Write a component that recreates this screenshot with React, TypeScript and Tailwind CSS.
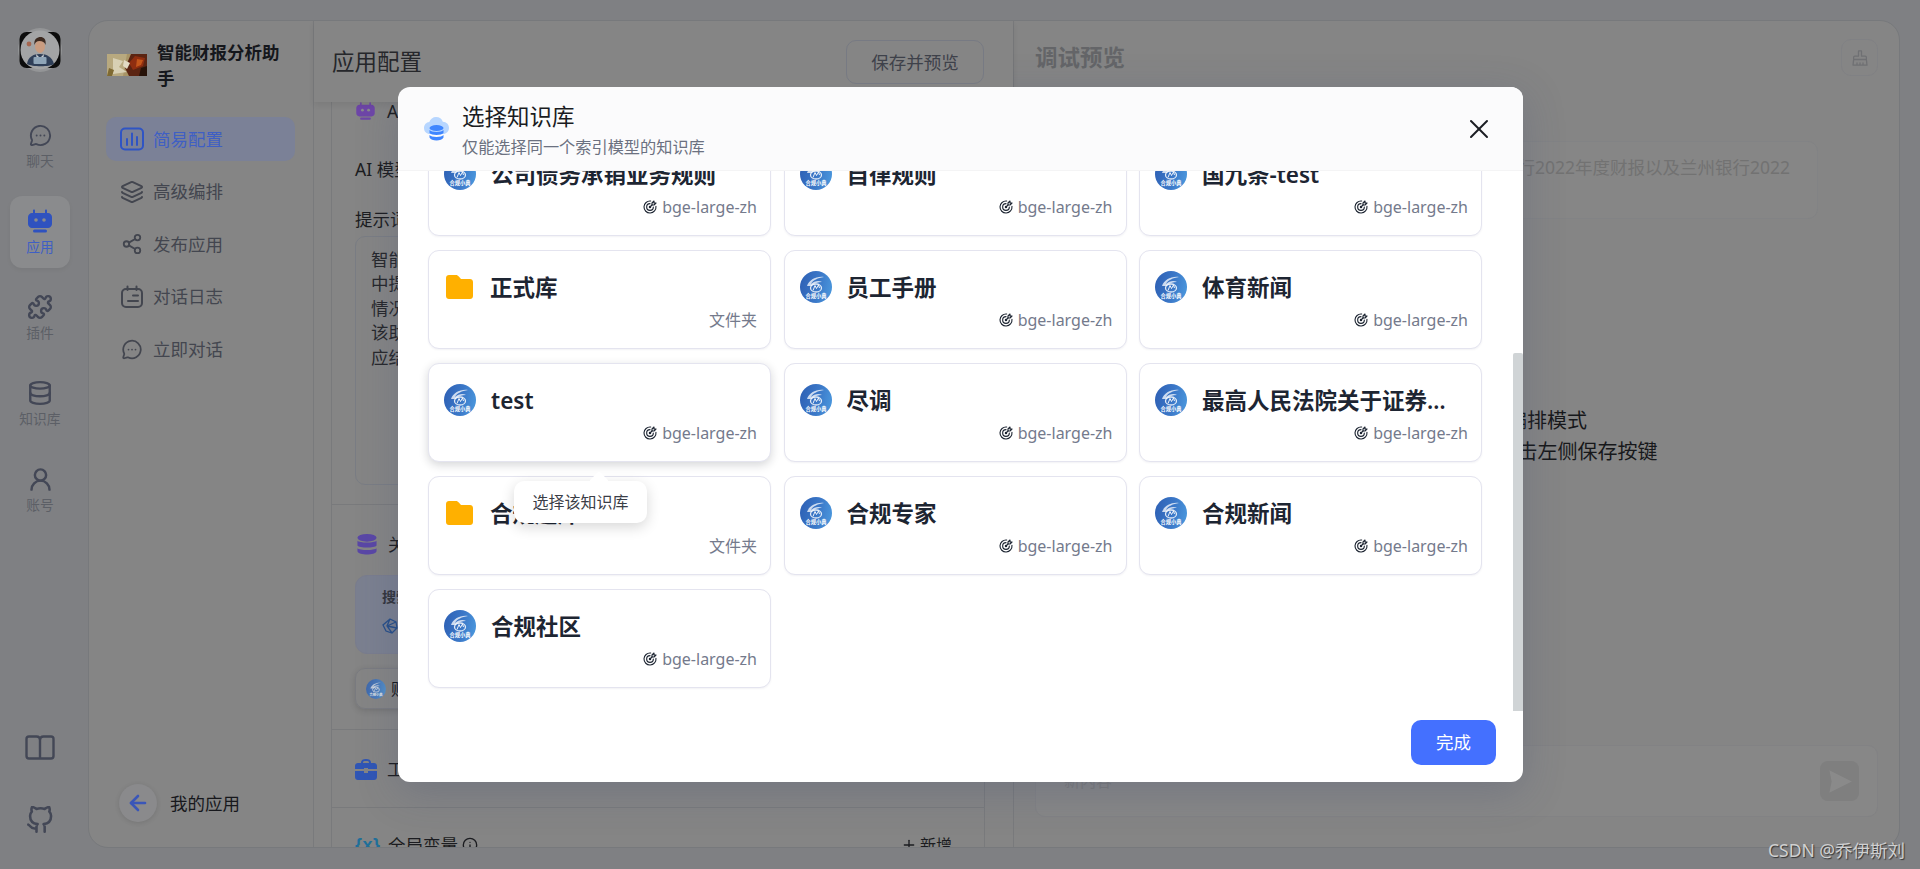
import { ArrowLeft, Info, Layers, MessageCircleMore, Plus, Puzzle, Share2, X, Database, UserRound } from "lucide-react";
import { TbTargetArrow } from "react-icons/tb";
import { FiGithub } from "react-icons/fi";

type Kb = { name: string; folder?: boolean; tip?: boolean };

const kbs: Kb[] = [
  { name: "公司债务承销业务规则" },
  { name: "自律规则" },
  { name: "国九条-test" },
  { name: "正式库", folder: true },
  { name: "员工手册" },
  { name: "体育新闻" },
  { name: "test", tip: true },
  { name: "尽调" },
  { name: "最高人民法院关于证券市场虚假陈述" },
  { name: "合规题库", folder: true },
  { name: "合规专家" },
  { name: "合规新闻" },
  { name: "合规社区" },
];

function KbLogo({ className = "h-8 w-8" }: { className?: string }) {
  return (
    <svg viewBox="0 0 32 32" className={`shrink-0 ${className}`}>
      <defs>
        <linearGradient id="kb-logo" x1="0" y1="0.4" x2="1" y2="0.6">
          <stop offset="0" stopColor="#2f62b6" />
          <stop offset="0.55" stopColor="#3b78c8" />
          <stop offset="1" stopColor="#4a96dc" />
        </linearGradient>
      </defs>
      <circle cx="16" cy="16" r="16" fill="url(#kb-logo)" />
      <path d="M7 15c2-6 9-10 17-9-6 1-11 3-13 7 3-3 8-4 11-2-4 0-8 1-10 4z" fill="#fff" fillOpacity="0.75" />
      <ellipse cx="16" cy="17" rx="5.5" ry="4" fill="none" stroke="#fff" strokeOpacity="0.85" strokeWidth="1.3" />
      <path d="M13 19.5l2-5 1.5 3 2-3.500 1 3" fill="none" stroke="#fff" strokeWidth="0.9" />
      <text x="16" y="27" textAnchor="middle" fontSize="5.2" fontWeight="700" fill="#fff" fontFamily="'Noto Sans CJK SC', sans-serif">合规小典</text>
    </svg>
  );
}

function FolderIcon() {
  return (
    <svg viewBox="0 0 27 24" className="ml-[2px] h-6 w-[27px] shrink-0">
      <path d="M3 0h7c1.200 0 2 .6 2.800 1.500L15 4h9c1.700 0 3 1.300 3 3v14c0 1.700-1.300 3-3 3H3c-1.700 0-3-1.300-3-3V3c0-1.700 1.300-3 3-3z" fill="#ffb000" />
    </svg>
  );
}

function KbCard({ kb }: { kb: Kb }) {
  return (
    <div className={`relative flex flex-col rounded-[11px] border border-[#e4e4ef] bg-white pl-[15px] pr-[13px] pt-[20px] ${kb.tip ? "z-10 shadow-[0_3px_10px_rgba(20,25,40,0.18)]" : "shadow-[0_1px_2px_rgba(40,40,80,0.06)]"}`}>
      <div className="flex h-8 items-center">
        {kb.folder ? <FolderIcon /> : <KbLogo />}
        <div className={`mt-[2px] truncate text-[22.5px] font-semibold leading-8 text-[#1d2532] ${kb.folder ? "ml-[17px]" : "ml-[15px]"}`}>{kb.name}</div>
      </div>
      <div className="mt-[5px] flex items-center justify-end text-[16px] leading-6 text-[#747a8c]">
        {kb.folder ? (
          "文件夹"
        ) : (
          <>
            <TbTargetArrow className="mr-[4px] h-4 w-4 text-[#1d2532]" strokeWidth={1.7} />
            bge-large-zh
          </>
        )}
      </div>
      {kb.tip && (
        <div className="absolute left-[85px] top-[117px] z-20 flex h-[42px] w-[133px] items-center justify-center rounded-[10px] bg-white text-[16px] text-[#3b3e47] shadow-[0_4px_14px_rgba(0,0,0,0.16)]">
          <div className="absolute -top-[7px] left-[78px] h-[14px] w-[14px] rotate-45 rounded-[2px] bg-white" />
          <span className="relative">选择该知识库</span>
        </div>
      )}
    </div>
  );
}

function RobotIcon({ className }: { className: string }) {
  return (
    <svg viewBox="0 0 26 26" className={className} fill="currentColor">
      <path d="M7 1.500c.7 0 1 .4 1 1V5h10V2.500c0-.6.3-1 1-1s1 .4 1 1V5h1c2 0 4 1.800 4 4v7c0 2.200-2 4-4 4H5c-2 0-4-1.800-4-4V9c0-2.200 2-4 4-4h1V2.500c0-.6.3-1 1-1z" />
      <rect x="6" y="21.500" width="14" height="3" rx="1.500" />
      <circle cx="9" cy="12" r="1.800" fill="#8a8b8d" />
      <circle cx="17" cy="12" r="1.800" fill="#8a8b8d" />
    </svg>
  );
}

function BookIcon() {
  return (
    <svg viewBox="0 0 30 26" className="h-[26px] w-[30px]" fill="none" stroke="#434756" strokeWidth="2.400" strokeLinejoin="round">
      <path d="M15 5c0-2-1.500-3.500-3.500-3.500H4C2.500 1.500 1.500 2.500 1.500 4v17c0 1.500 1 2.500 2.500 2.500h22c1.500 0 2.500-1 2.500-2.500V4c0-1.500-1-2.500-2.500-2.500h-7.500C16.500 1.500 15 3 15 5v18" />
    </svg>
  );
}

function ConfigIcon() {
  return (
    <svg viewBox="0 0 24 24" className="h-6 w-6" fill="none" stroke="#2f54c4" strokeWidth="2" strokeLinecap="round">
      <rect x="1" y="1.500" width="22" height="21" rx="4" />
      <path d="M7 12v6M12 6.500V18M17 10v8" />
    </svg>
  );
}

function LogIcon() {
  return (
    <svg viewBox="0 0 24 24" className="h-6 w-6" fill="none" stroke="#43464f" strokeWidth="2" strokeLinecap="round">
      <rect x="2" y="4" width="20" height="18" rx="4" />
      <path d="M7.500 1.500V5M16.500 1.500V5M13 10.500h5M8 16h10" />
    </svg>
  );
}

function AppLogo() {
  return (
    <svg viewBox="0 0 40 22" className="h-[22px] w-10 shrink-0">
      <rect width="40" height="22" fill="#a89466" />
      <path d="M0 0h20l-4 22H0z" fill="#b8a97f" />
      <path d="M6 4l10 3-4 6 8 5-14 2z" fill="#d8d0b4" />
      <path d="M2 14l5 2-2 6H0z" fill="#7f6a32" />
      <path d="M24 0h16v22H22l-4-8z" fill="#5b2412" />
      <path d="M28 2l10 2-2 8-10 4-4-7z" fill="#8f2e10" />
      <path d="M30 5l6 1-2 5-5 2z" fill="#c4561a" />
      <path d="M34 14l6-2v10h-8z" fill="#271208" />
      <path d="M17 6l6 3-3 6-4-3z" fill="#e2dac4" />
    </svg>
  );
}

function Avatar() {
  return (
    <svg viewBox="0 0 44 44" className="h-[44px] w-[44px]">
      <circle cx="22" cy="22" r="22" fill="#949597" />
      <rect x="1.500" y="4" width="41" height="36" rx="7" fill="#0c0c0c" />
      <circle cx="22" cy="22" r="19.500" fill="#a3a4a5" />
      <circle cx="11" cy="16" r="2.400" fill="#a5664f" />
      <path d="M9 36c1-7 6-10 13-10s12 3 14 10c-4 3-22 3-27 0z" fill="#2f3f58" />
      <path d="M18 26l4 4 4-4-1 6h-6z" fill="#c9cdd2" />
      <ellipse cx="22" cy="18.500" rx="5" ry="6.500" fill="#c99c80" />
      <path d="M16.500 17c-1-6 3-8 6-8s6 2 5 8c-1-3-3-4-6-4s-4 1-5 4z" fill="#3d2a20" />
      <rect x="15.500" y="29" width="13" height="7" rx="1" fill="#8fa5b8" />
    </svg>
  );
}

function BroomIcon() {
  return (
    <svg viewBox="0 0 24 24" className="h-[18px] w-[18px]" fill="none" stroke="#6f7073" strokeWidth="1.700" strokeLinejoin="round" strokeLinecap="round">
      <path d="M10 2.500h4v7h5c1 0 1.500.6 1.500 1.500v3h-17v-3c0-.9.5-1.500 1.500-1.500h5z" />
      <path d="M3.500 14l-.8 7.500h18.600l-.8-7.500M8 21.500v-3M12 21.500v-3M16 21.500v-3" />
    </svg>
  );
}

function RailItem({ icon, label, active }: { icon: React.ReactNode; label: string; active?: boolean }) {
  return (
    <div className={`flex h-[72px] w-[60px] flex-col items-center rounded-[12px] pt-[11px] ${active ? "bg-[#8a8b8d] text-[#2f52bf] shadow-[0_2px_4px_rgba(0,0,0,0.05)]" : "text-[#434756]"}`}>
      <div className="flex h-7 items-center justify-center">{icon}</div>
      <div className={`mt-[5px] whitespace-nowrap text-[13.75px] leading-[14px] ${active ? "text-[#3f5fc4]" : "text-[#5c5f66]"}`}>{label}</div>
    </div>
  );
}

function NavItem({ icon, label, active }: { icon: React.ReactNode; label: string; active?: boolean }) {
  return (
    <div className={`flex h-11 w-[189px] items-center gap-[9px] rounded-[10px] pl-[14px] text-[17.5px] ${active ? "bg-[#7b8197] text-[#3f5fc4]" : "text-[#43464f]"}`}>
      {icon}
      <span>{label}</span>
    </div>
  );
}

export default function App() {
  return (
    <div className="relative flex h-[869px] w-[1920px] overflow-hidden bg-[#7f8083] font-['Noto_Sans','Noto_Sans_CJK_SC',sans-serif]">
      {/* left rail */}
      <div className="flex w-[88px] shrink-0 flex-col items-center pb-[35px] pr-[8px] pt-[28px]">
        <Avatar />
        <div className="mt-[38px] flex flex-col items-center gap-[14px]">
          <RailItem icon={<MessageCircleMore className="h-[23px] w-[23px]" strokeWidth={2} />} label="聊天" />
          <RailItem active icon={<RobotIcon className="h-[26px] w-[26px]" />} label="应用" />
          <RailItem icon={<Puzzle className="h-[26px] w-[26px]" strokeWidth={2.2} />} label="插件" />
          <RailItem icon={<Database className="h-[26px] w-[26px]" strokeWidth={2.2} />} label="知识库" />
          <RailItem icon={<UserRound className="h-[27px] w-[27px]" strokeWidth={2.2} />} label="账号" />
        </div>
        <div className="mt-auto flex flex-col items-center gap-[45px] text-[#434756]">
          <BookIcon />
          <FiGithub className="h-7 w-7" strokeWidth={2.200} />
        </div>
      </div>

      <div className="mt-[20px] flex h-[828px] w-[1812px] overflow-hidden rounded-[20px] border border-[#77797c] bg-[#858585]">
        {/* app sidebar */}
        <div className="flex w-[225px] shrink-0 flex-col border-r border-[#797a7c] pb-[25px] pl-[17px]">
          <div className="flex items-center gap-[10px] pl-[1px] pt-[18px]">
            <AppLogo />
            <div className="w-[128px] text-[17.5px] font-bold leading-[26px] text-[#15171c]">智能财报分析助手</div>
          </div>
          <div className="mt-[26px] flex flex-col gap-[8.500px]">
            <NavItem active icon={<ConfigIcon />} label="简易配置" />
            <NavItem icon={<Layers className="h-6 w-6" strokeWidth={2} />} label="高级编排" />
            <NavItem icon={<Share2 className="h-[22px] w-6" strokeWidth={2} />} label="发布应用" />
            <NavItem icon={<LogIcon />} label="对话日志" />
            <NavItem icon={<MessageCircleMore className="h-[21px] w-6" strokeWidth={2} />} label="立即对话" />
          </div>
          <div className="ml-[13px] mt-auto flex items-center gap-[13px]">
            <div className="flex h-[38px] w-[38px] items-center justify-center rounded-full bg-[#8a8a8c] shadow-[0_1px_5px_rgba(0,0,0,0.12)]">
              <ArrowLeft className="h-[24px] w-[24px] text-[#3a56b8]" strokeWidth={2.600} />
            </div>
            <span className="text-[17.5px] text-[#17181c]">我的应用</span>
          </div>
        </div>

        {/* config column */}
        <div className="flex w-[700px] shrink-0 flex-col border-r border-[#797a7c]">
          <div className="relative z-10 flex h-[81px] shrink-0 items-center justify-between bg-[#858585] pl-[18px] pr-[29px] pt-[1px] shadow-[0_3px_6px_rgba(0,0,0,0.08)]">
            <div className="text-[22.5px] text-[#26272b]">应用配置</div>
            <div className="flex h-[44px] w-[138px] items-center justify-center rounded-[10px] border border-[#777a83] text-[17.5px] text-[#3e414a]">保存并预览</div>
          </div>
          <div className="ml-[17px] w-[654px] flex-1 overflow-hidden border-x border-[#797a7c] text-[17.5px] text-[#1b1c20]">
            <div className="h-[403px] border-b border-[#797a7c] pl-[23px]">
              <div className="flex h-[18px] items-center gap-[11px]">
                <RobotIcon className="h-[20px] w-[21px] text-[#6e46a8]" />
                <span>AI 配置</span>
              </div>
              <div className="mt-[37px] leading-6">AI 模型</div>
              <div className="mt-[26px] leading-6">提示词</div>
              <div className="mt-[5px] h-[249px] w-[608px] rounded-[10px] border border-[#7a7d84] pl-[15px] pt-[10px] leading-[24.400px] text-[#26272b]">
                智能财报分析助手<br />中提取财务数据<br />情况进行分析<br />该助手可以<br />应结合知识库
              </div>
            </div>
            <div className="h-[225px] border-b border-[#797a7c] pl-[23px] pt-[28px]">
              <div className="flex h-[22px] items-center gap-[11px]">
                <svg viewBox="0 0 20 22" className="ml-[2px] h-[21px] w-5" fill="#5a47a6">
                  <ellipse cx="10" cy="4" rx="10" ry="4" />
                  <path d="M0 7c2 2.500 18 2.500 20 0v5c-2 3-18 3-20 0zM0 15c2 2.500 18 2.500 20 0v3c-1 4.500-19 4.500-20 0z" />
                </svg>
                <span>关联知识库</span>
              </div>
              <div className="mt-[20px] h-[79px] w-[608px] rounded-[12px] border border-[#7a7d8e] bg-[#7b8090] pl-[26px] pt-[11px]">
                <div className="text-[14px] font-semibold leading-5 text-[#33353c]">搜索参数</div>
                <div className="mt-[11px] flex h-[16px] items-center">
                  <svg viewBox="0 0 16 16" className="h-4 w-4" fill="none" stroke="#274f8a" strokeWidth="1.300">
                    <path d="M8 1l6 3 1 6-5 5-6-2-3-6zM8 1L5 8l5 7M5 8l9-4M5 8l10 2" />
                  </svg>
                </div>
              </div>
              <div className="mt-[14px] flex h-[41px] w-[290px] items-center gap-[5px] rounded-[10px] border border-[#7a7b80] pl-[10px] shadow-[0_2px_6px_rgba(0,0,0,0.14)]">
                <KbLogo className="h-5 w-5 opacity-80" />
                <span className="text-[16px] text-[#121317]">财报数据</span>
              </div>
            </div>
            <div className="flex h-[78px] items-center gap-[10px] border-b border-[#797a7c] pl-[23px] pt-[1px]">
              <svg viewBox="0 0 22 22" className="h-[22px] w-[22px]" fill="#3056b5">
                <path d="M6 4.500C6 2 8 1 11 1s5 1 5 3.500V5h3c1.700 0 3 1.300 3 3v3H13v-1H9v1H0V8c0-1.700 1.300-3 3-3h3zM8 5h6v-.5C14 3.300 13 3 11 3s-3 .3-3 1.500zM0 13h9v2h4v-2h9v6c0 1.700-1.300 3-3 3H3c-1.700 0-3-1.300-3-3z" />
              </svg>
              <span>工具</span>
            </div>
            <div className="flex h-[60px] items-center justify-between pl-[23px] pr-[32px] pt-[14px]">
              <div className="flex items-center">
                <span className="w-[33px] font-['Liberation_Sans',sans-serif] text-[18px] font-bold tracking-[0.5px] text-[#1f6f99]">{"{x}"}</span>
                <span>全局变量</span>
                <Info className="ml-[4px] h-4 w-4" />
              </div>
              <div className="flex items-center gap-[3px] text-[16px]">
                <Plus className="h-4 w-4" />
                新增
              </div>
            </div>
          </div>
        </div>

        {/* debug column */}
        <div className="flex flex-1 flex-col pl-[21px] pr-[21px]">
          <div className="mt-[18px] flex h-[37px] shrink-0 items-center justify-between">
            <div className="text-[22.5px] font-bold text-[#646568]">调试预览</div>
            <div className="flex h-[37px] w-[37px] items-center justify-center rounded-[10px] border border-[#808184]">
              <BroomIcon />
            </div>
          </div>
          <div className="ml-auto mr-[60px] mt-[65px] h-[78px] w-[700px] rounded-[10px] border border-[#828385] bg-[#868686] pr-[27px] pt-[13px] text-[17.5px] leading-6 text-[#727272]">
            <div className="whitespace-nowrap text-right">请分析一下兰州银行2022年度财报以及兰州银行2022</div>
            <div className="pl-[26px]">年度财报的差异</div>
          </div>
          <div className="ml-[372px] mt-[186px] text-[20px] leading-[31px] text-[#17181b]">
            <div>当前为简易编排模式</div>
            <div>需保存, 请点击左侧保存按键</div>
          </div>
          <div className="mb-[30px] mt-auto flex h-[72px] items-center justify-between rounded-[10px] border border-[#828284] bg-[#878787] pl-[28px] pr-[18px]">
            <span className="text-[16px] text-[#7b7b7b]">新内容</span>
            <div className="flex h-10 w-[39px] items-center justify-center rounded-[8px] bg-[#7f7f7f]">
              <svg viewBox="0 0 24 24" className="h-[27px] w-[27px]" fill="#8a8a8a">
                <path d="M3 2l20 10L3 22l2-10z" />
              </svg>
            </div>
          </div>
        </div>
      </div>

      {/* 选择知识库 modal */}
      <div className="absolute left-[398px] top-[87px] flex h-[695px] w-[1125px] flex-col overflow-hidden rounded-[12px] bg-white shadow-[0_10px_40px_rgba(60,70,110,0.25)]">
        <div className="relative z-20 flex h-[84px] shrink-0 items-center border-b border-[#f4f4f5] bg-[#fbfbfc] pl-[26px] pr-[28px]">
          <svg viewBox="0 0 25 24" className="h-6 w-[25px] shrink-0">
            <path d="M12 0c3.500 0 6 2 6.800 4.800C22.500 5 25 7.500 25 11c0 3.500-2.800 6-6 6H6c-3.500 0-6-2.500-6-6 0-3.300 2.300-5.700 5.300-6C6.300 2 9 0 12 0z" fill="#b7d6ff" />
            <ellipse cx="12.500" cy="11" rx="7" ry="3" fill="#3f86ff" />
            <path d="M5.500 13c1.500 2.500 12.500 2.500 14 0v3c-1.500 2.500-12.500 2.500-14 0zM5.500 18c1.500 2.500 12.500 2.500 14 0v2.500C18 24.500 7 24.500 5.500 20.500z" fill="#3f86ff" />
          </svg>
          <div className="ml-[13px] flex flex-col pt-[3px]">
            <div className="text-[22.5px] leading-[30px] text-[#1a1c22]">选择知识库</div>
            <div className="mt-[4px] text-[16.2px] leading-[22px] text-[#6b7180]">仅能选择同一个索引模型的知识库</div>
          </div>
          <X className="ml-auto h-8 w-8 text-[#1a1c22]" strokeWidth={1.5} />
        </div>
        <div className="min-h-0 flex-1 overflow-hidden pl-[30px]">
          <div className="-mt-[34px] grid auto-rows-[99px] grid-cols-[repeat(3,343px)] gap-x-[12.500px] gap-y-[14px]">
            {kbs.map((kb) => (
              <KbCard key={kb.name} kb={kb} />
            ))}
          </div>
        </div>
        <div className="flex h-[70px] shrink-0 justify-end pr-[27px] pt-[8px]">
          <div className="flex h-[45px] w-[85px] items-center justify-center rounded-[10px] bg-[#4470ff] text-[17.5px] text-white">完成</div>
        </div>
        {/* scrollbar thumb */}
        <div className="absolute bottom-[71px] right-0 top-[266px] z-10 w-[10px] rounded-t-[2px] bg-[#d0d4d6]" />
      </div>

      <div className="absolute bottom-[10px] right-[15px] text-[17.5px] leading-[18px] text-[#d0d0d0] [text-shadow:1px_1px_1px_rgba(0,0,0,0.6)]">CSDN @乔伊斯刘</div>
    </div>
  );
}
